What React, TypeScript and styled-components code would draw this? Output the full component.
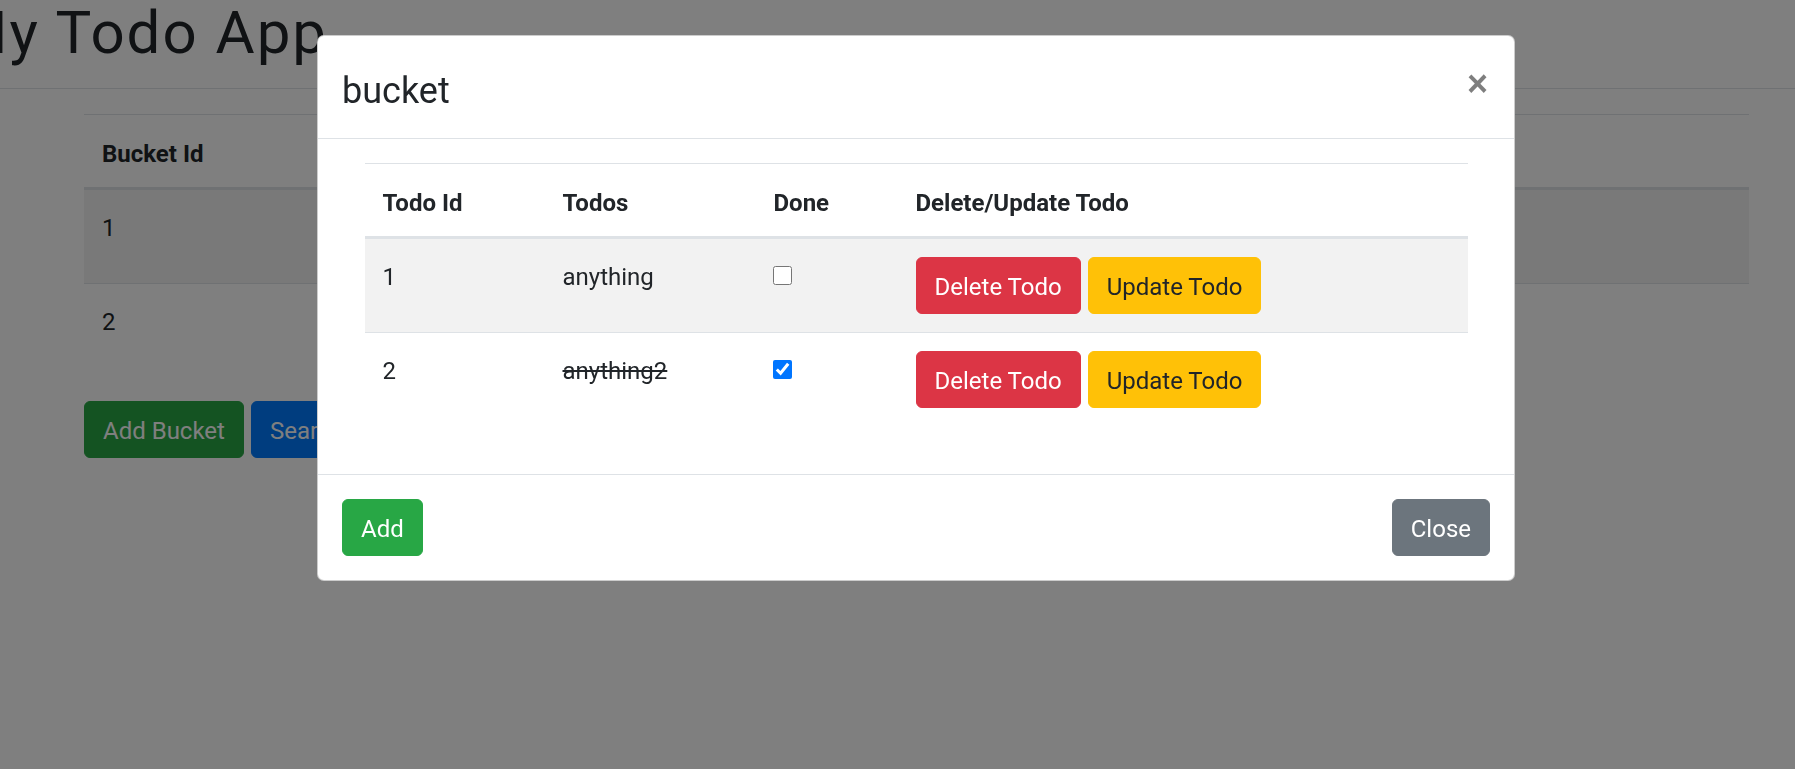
import React from "react";
import styled, { createGlobalStyle, css } from "styled-components";

const GlobalStyle = createGlobalStyle`
  *, *::before, *::after { box-sizing: border-box; }
  html, body { margin: 0; padding: 0; }
  body {
    font-family: Roboto, "Liberation Sans", Arial, sans-serif;
    font-size: 24px;
    line-height: 1.5;
    color: #212529;
    background: #fff;
    overflow: hidden;
  }
`;

type Variant = "danger" | "warning" | "success" | "secondary" | "primary";

const palette: Record<Variant, { bg: string; fg: string }> = {
  danger: { bg: "#dc3545", fg: "#fff" },
  warning: { bg: "#ffc107", fg: "#212529" },
  success: { bg: "#28a745", fg: "#fff" },
  secondary: { bg: "#6c757d", fg: "#fff" },
  primary: { bg: "#007bff", fg: "#fff" },
};

const Page = styled.div`
  width: 1795px;
  min-height: 769px;
`;

const Header = styled.header`
  padding-bottom: 20px;
  border-bottom: 1px solid #dee2e6;
`;

const AppTitle = styled.h1`
  margin: -3px 0 0 -45px;
  font-size: 60px;
  font-weight: 400;
  line-height: 71px;
  letter-spacing: 2px;
  white-space: nowrap;
`;

const Main = styled.main`
  padding: 25px 46px 0 84px;
`;

const DataTable = styled.table`
  width: 100%;
  border-collapse: collapse;
  table-layout: fixed;
  margin-bottom: 24px;
`;

const Th = styled.th<{ $w?: string }>`
  ${(p) => p.$w && css`width: ${p.$w};`}
  padding: 21px 18px 15px;
  text-align: left;
  vertical-align: bottom;
  font-weight: 700;
  border-top: 1px solid #dee2e6;
  border-bottom: 3px solid #dee2e6;
  white-space: nowrap;
`;

const Tr = styled.tr<{ $striped?: boolean }>`
  background: ${(p) => (p.$striped ? "rgba(0,0,0,0.05)" : "transparent")};
`;

const Td = styled.td<{ $text?: boolean }>`
  padding: ${(p) => (p.$text ? "20px 18px 16px" : "18px")};
  vertical-align: top;
  border-top: 1px solid #dee2e6;
  white-space: nowrap;
`;

const Button = styled.button<{ $variant: Variant }>`
  display: inline-block;
  height: 57px;
  font-family: inherit;
  font-size: 24px;
  line-height: 36px;
  padding: 2px 18px 0;
  border: 1px solid ${(p) => palette[p.$variant].bg};
  border-radius: 6px;
  background: ${(p) => palette[p.$variant].bg};
  color: ${(p) => palette[p.$variant].fg};
  cursor: pointer;
  white-space: nowrap;
`;

const ButtonRow = styled.div`
  display: flex;
  gap: 7px;
`;

const Overlay = styled.div`
  position: fixed;
  inset: 0;
  background: rgba(0, 0, 0, 0.5);
  z-index: 10;
`;

const ModalLayer = styled.div`
  position: fixed;
  inset: 0;
  z-index: 20;
  overflow: hidden;
`;

const Dialog = styled.div`
  width: 1198px;
  margin: 35px 0 0 317px;
`;

const ModalContent = styled.div`
  display: flex;
  flex-direction: column;
  background: #fff;
  border: 1px solid rgba(0, 0, 0, 0.2);
  border-radius: 7px;
`;

const ModalHeader = styled.div`
  display: flex;
  align-items: flex-start;
  padding: 24px;
  border-bottom: 1px solid #dee2e6;
`;

const ModalTitle = styled.h4`
  margin: 0 0 -4px;
  padding-top: 4px;
  font-size: 36px;
  font-weight: 400;
  line-height: 54px;
`;

const CloseButton = styled.button`
  margin: -24px -24px -24px auto;
  padding: 30px 26px 18px 22px;
  background: transparent;
  border: 0;
  font-family: "Liberation Sans", Arial, sans-serif;
  font-size: 36px;
  font-weight: 700;
  line-height: 1;
  color: #000;
  opacity: 0.5;
  text-shadow: 0 1px 0 #fff;
  cursor: pointer;
`;

const ModalBody = styled.div`
  padding: 24px;
`;

const Container = styled.div`
  padding: 0 22.5px;
`;

const ModalFooter = styled.div`
  display: flex;
  justify-content: space-between;
  align-items: center;
  padding: 18px;
  border-top: 1px solid #dee2e6;

  & > * {
    margin: 6px;
  }
`;

const Checkbox = styled.input`
  display: block;
  width: 19px;
  height: 19px;
  margin: 9px 0 0 -1px;
`;

const TodoText = styled.span<{ $done?: boolean }>`
  text-decoration: ${(p) => (p.$done ? "line-through" : "none")};
`;

const buckets = [
  { id: 1, name: "bucket" },
  { id: 2, name: "bucket2" },
];

const todos = [
  { id: 1, text: "anything", done: false },
  { id: 2, text: "anything2", done: true },
];

export default function App() {
  return (
    <>
      <GlobalStyle />
      <Page>
        <Header>
          <AppTitle>My Todo App</AppTitle>
        </Header>
        <Main>
          <DataTable>
            <thead>
              <tr>
                <Th $w="20%">Bucket Id</Th>
                <Th $w="40%">Bucket Name</Th>
                <Th $w="40%">Open/Delete Bucket</Th>
              </tr>
            </thead>
            <tbody>
              {buckets.map((b, i) => (
                <Tr key={b.id} $striped={i % 2 === 0}>
                  <Td $text>{b.id}</Td>
                  <Td $text>{b.name}</Td>
                  <Td>
                    <ButtonRow>
                      <Button $variant="primary">Open</Button>
                      <Button $variant="danger">Delete</Button>
                    </ButtonRow>
                  </Td>
                </Tr>
              ))}
            </tbody>
          </DataTable>
          <ButtonRow>
            <Button $variant="success">Add Bucket</Button>
            <Button $variant="primary">Search Bucket</Button>
          </ButtonRow>
        </Main>
      </Page>

      <Overlay />
      <ModalLayer>
        <Dialog role="dialog" aria-modal="true">
          <ModalContent>
            <ModalHeader>
              <ModalTitle>bucket</ModalTitle>
              <CloseButton aria-label="Close">×</CloseButton>
            </ModalHeader>
            <ModalBody>
              <Container>
                <DataTable>
                  <thead>
                    <tr>
                      <Th $w="180px">Todo Id</Th>
                      <Th $w="211px">Todos</Th>
                      <Th $w="142px">Done</Th>
                      <Th>Delete/Update Todo</Th>
                    </tr>
                  </thead>
                  <tbody>
                    {todos.map((t, i) => (
                      <Tr key={t.id} $striped={i % 2 === 0}>
                        <Td $text>{t.id}</Td>
                        <Td $text>
                          <TodoText $done={t.done}>{t.text}</TodoText>
                        </Td>
                        <Td>
                          <Checkbox type="checkbox" defaultChecked={t.done} />
                        </Td>
                        <Td>
                          <ButtonRow>
                            <Button $variant="danger">Delete Todo</Button>
                            <Button $variant="warning">Update Todo</Button>
                          </ButtonRow>
                        </Td>
                      </Tr>
                    ))}
                  </tbody>
                </DataTable>
              </Container>
            </ModalBody>
            <ModalFooter>
              <Button $variant="success">Add</Button>
              <Button $variant="secondary">Close</Button>
            </ModalFooter>
          </ModalContent>
        </Dialog>
      </ModalLayer>
    </>
  );
}
